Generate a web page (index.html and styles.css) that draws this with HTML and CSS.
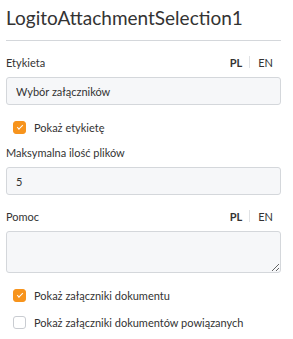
FILE: index.html
```html
<!DOCTYPE html>
<html lang="pl">
<head>
    <meta charset="UTF-8">
    <title>LogitoAttachmentSelection1</title>
    <link rel="stylesheet" href="styles.css">
</head>
<body>
    <div class="panel">
        <h1 class="title">LogitoAttachmentSelection1</h1>

        <div class="field">
            <div class="field-head">
                <label>Etykieta</label>
                <div class="langs">
                    <span class="lang active">PL</span>
                    <span class="lang-sep"></span>
                    <span class="lang">EN</span>
                </div>
            </div>
            <input class="text-input" type="text" value="Wybór załączników">
        </div>

        <label class="check">
            <span class="box checked"></span>
            Pokaż etykietę
        </label>

        <div class="field">
            <div class="field-head">
                <label>Maksymalna ilość plików</label>
            </div>
            <input class="text-input" type="text" value="5">
        </div>

        <div class="field">
            <div class="field-head">
                <label>Pomoc</label>
                <div class="langs">
                    <span class="lang active">PL</span>
                    <span class="lang-sep"></span>
                    <span class="lang">EN</span>
                </div>
            </div>
            <textarea class="text-area"></textarea>
        </div>

        <label class="check">
            <span class="box checked"></span>
            Pokaż załączniki dokumentu
        </label>
        <label class="check">
            <span class="box"></span>
            Pokaż załączniki dokumentów powiązanych
        </label>
    </div>
</body>
</html>
```

FILE: styles.css
```css
body {
    margin: 0;
    padding: 0 12px 0 6px;
    font-family: 'Lato', sans-serif;
    color: #333;
    background: white;
}

.title {
    font-size: 19px;
    font-weight: normal;
    color: #333;
    margin: 0;
    padding: 5px 0 9px;
    border-bottom: 1px solid #d4d7db;
    line-height: 26px;
}

.field {
    margin-top: 13px;
}

.field-head {
    display: flex;
    justify-content: space-between;
    align-items: center;
    height: 16px;
    margin-bottom: 7px;
    font-size: 11px;
}

.langs {
    display: flex;
    align-items: center;
    font-size: 11px;
    padding-right: 8px;
}

.lang {
    color: #333;
}

.lang.active {
    font-weight: bold;
}

.lang-sep {
    width: 1px;
    height: 12px;
    background: #e0e2e5;
    margin: 0 8px 0 7px;
}

.text-input,
.text-area {
    display: block;
    box-sizing: border-box;
    width: 100%;
    background: #f6f7f9;
    border: 1px solid #d4d7db;
    border-radius: 3px;
    font-family: inherit;
    font-size: 11px;
    color: #333;
    padding: 0 9px;
    margin: 0;
}

.text-input {
    height: 28px;
}

.text-area {
    height: 42px;
    resize: vertical;
}

.check {
    display: flex;
    align-items: center;
    gap: 8px;
    font-size: 11px;
    padding-left: 7px;
    margin-top: 15px;
    height: 14px;
}

.check + .field {
    margin-top: 10px;
}

.check + .check {
    margin-top: 13px;
}

.box {
    width: 13px;
    height: 13px;
    box-sizing: border-box;
    border: 1px solid #c9ccd1;
    border-radius: 3px;
    background: white;
    position: relative;
}

.box.checked {
    background: #f7941d;
    border-color: #f7941d;
}

.box.checked::after {
    content: "";
    position: absolute;
    left: 3px;
    top: 3px;
    width: 5px;
    height: 2px;
    border-left: 1.5px solid white;
    border-bottom: 1.5px solid white;
    transform: rotate(-45deg);
}
```
